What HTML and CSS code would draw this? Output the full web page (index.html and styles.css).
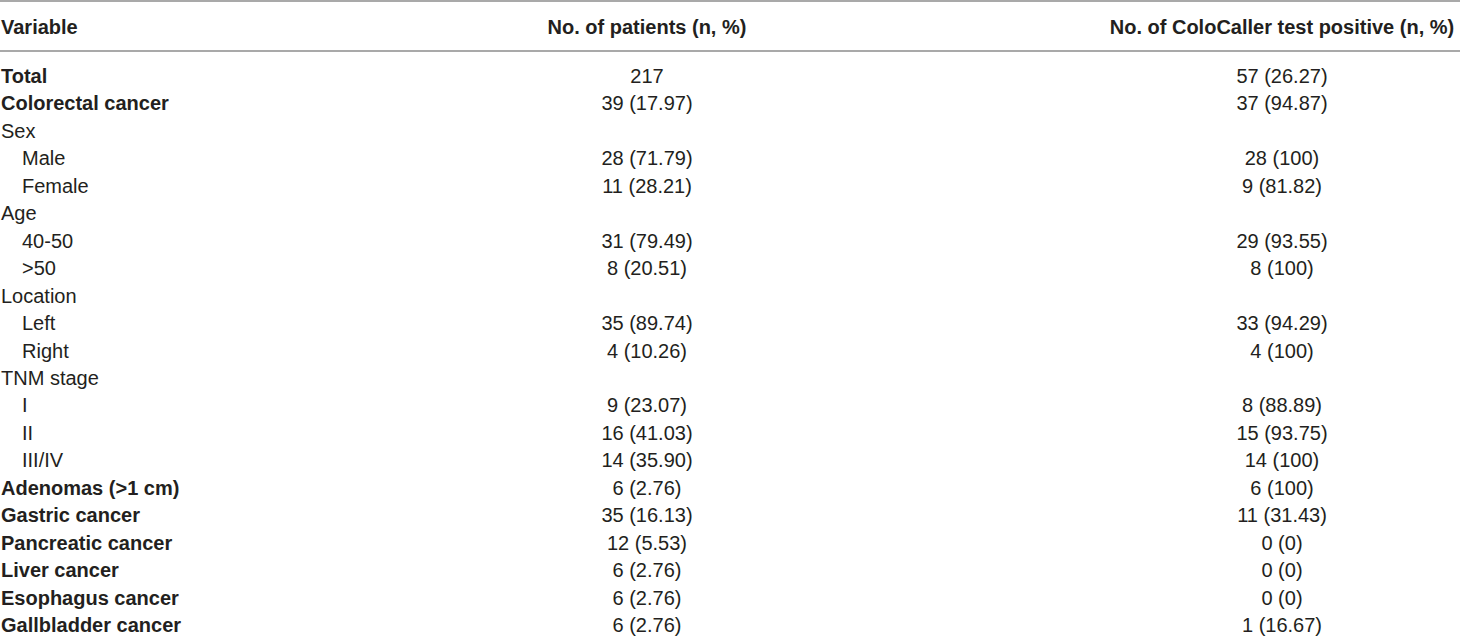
FILE: index.html
```html
<!DOCTYPE html>
<html>
<head>
<meta charset="utf-8">
<link rel="stylesheet" href="styles.css">
</head>
<body>
<table class="tbl">
  <colgroup>
    <col class="c1"><col class="c2"><col class="c3">
  </colgroup>
  <thead>
    <tr>
      <th class="lft">Variable</th>
      <th>No. of patients (n, %)</th>
      <th>No. of ColoCaller test positive (n, %)</th>
    </tr>
  </thead>
  <tbody>
    <tr class="first"><td class="lft b">Total</td><td>217</td><td>57 (26.27)</td></tr>
    <tr><td class="lft b">Colorectal cancer</td><td>39 (17.97)</td><td>37 (94.87)</td></tr>
    <tr><td class="lft">Sex</td><td></td><td></td></tr>
    <tr><td class="lft ind">Male</td><td>28 (71.79)</td><td>28 (100)</td></tr>
    <tr><td class="lft ind">Female</td><td>11 (28.21)</td><td>9 (81.82)</td></tr>
    <tr><td class="lft">Age</td><td></td><td></td></tr>
    <tr><td class="lft ind">40-50</td><td>31 (79.49)</td><td>29 (93.55)</td></tr>
    <tr><td class="lft ind">&gt;50</td><td>8 (20.51)</td><td>8 (100)</td></tr>
    <tr><td class="lft">Location</td><td></td><td></td></tr>
    <tr><td class="lft ind">Left</td><td>35 (89.74)</td><td>33 (94.29)</td></tr>
    <tr><td class="lft ind">Right</td><td>4 (10.26)</td><td>4 (100)</td></tr>
    <tr><td class="lft">TNM stage</td><td></td><td></td></tr>
    <tr><td class="lft ind">I</td><td>9 (23.07)</td><td>8 (88.89)</td></tr>
    <tr><td class="lft ind">II</td><td>16 (41.03)</td><td>15 (93.75)</td></tr>
    <tr><td class="lft ind">III/IV</td><td>14 (35.90)</td><td>14 (100)</td></tr>
    <tr><td class="lft b">Adenomas (&gt;1 cm)</td><td>6 (2.76)</td><td>6 (100)</td></tr>
    <tr><td class="lft b">Gastric cancer</td><td>35 (16.13)</td><td>11 (31.43)</td></tr>
    <tr><td class="lft b">Pancreatic cancer</td><td>12 (5.53)</td><td>0 (0)</td></tr>
    <tr><td class="lft b">Liver cancer</td><td>6 (2.76)</td><td>0 (0)</td></tr>
    <tr><td class="lft b">Esophagus cancer</td><td>6 (2.76)</td><td>0 (0)</td></tr>
    <tr><td class="lft b">Gallbladder cancer</td><td>6 (2.76)</td><td>1 (16.67)</td></tr>
  </tbody>
</table>
</body>
</html>
```
FILE: styles.css
```css
html, body {
  margin: 0;
  padding: 0;
  background: #ffffff;
}
body {
  font-family: "Liberation Sans", Arial, sans-serif;
  font-size: 20px;
  color: #231f20;
}
.tbl {
  width: 1460px;
  border-collapse: collapse;
  table-layout: fixed;
}
.c1 { width: 190px; }
.c2 { width: 914px; }
.c3 { width: 356px; }
.tbl th {
  font-weight: bold;
  text-align: center;
  line-height: 24px;
  padding: 13px 0 11px;
  border-top: 2px solid #a9a9a9;
  border-bottom: 2px solid #a9a9a9;
  white-space: nowrap;
}
.tbl td {
  text-align: center;
  line-height: 27.45px;
  padding: 0;
  white-space: nowrap;
}
.tbl .lft {
  text-align: left;
  padding-left: 1px;
}
.tbl .ind {
  padding-left: 22px;
}
.tbl .b {
  font-weight: bold;
}
.tbl tr.first td {
  padding-top: 11px;
}
```
